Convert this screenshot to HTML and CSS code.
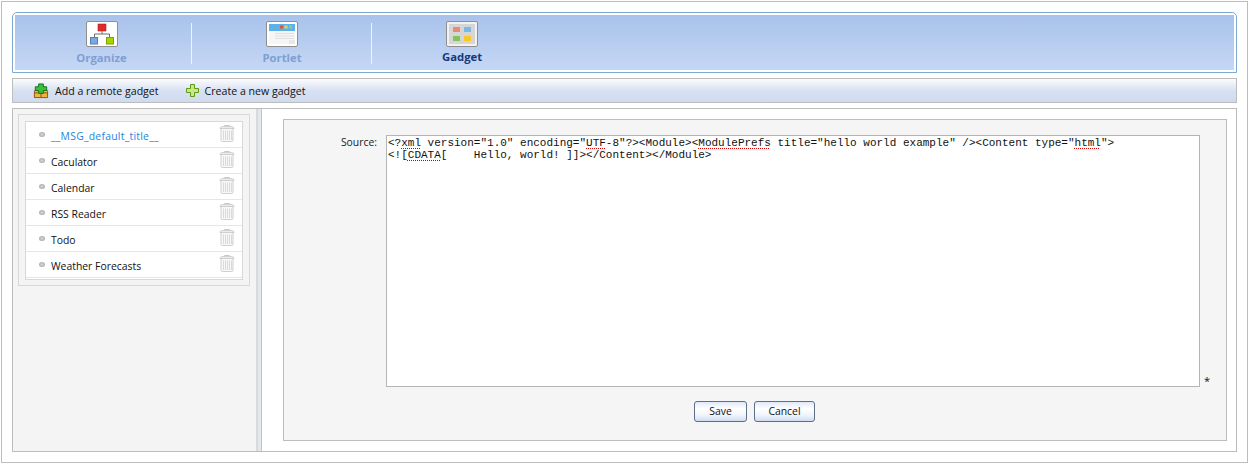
FILE: index.html
```html
<!DOCTYPE html>
<html lang="en">
<head>
<meta charset="utf-8">
<title>Gadget</title>
<link rel="stylesheet" href="styles.css">
</head>
<body>
<svg class="defs" width="0" height="0" aria-hidden="true">
  <defs>
    <symbol id="trash" viewBox="0 0 16 18">
      <path d="M5.500 2.500V1.500h5v1M1 4.500C1 3.400 2 2.700 3 2.700h10c1 0 2 .7 2 1.800z" fill="#f4f4f4" stroke="#c9c9c9"/>
      <path d="M2 4.500h12v11.700c0 .8-.6 1.300-1.300 1.300H3.300c-.7 0-1.300-.5-1.300-1.300z" fill="#f7f7f7" stroke="#cfcfcf"/>
      <path d="M4.500 6.500v9.500M6.500 6.500v9.500M8.500 6.500v9.500M10.500 6.500v9.500M12.500 6.500v9.500" stroke="#dadada"/>
    </symbol>
  </defs>
</svg>
<div class="shell">
  <nav class="tabs">
    <a class="tab tab-first">
      <span class="tile">
        <svg width="30" height="24" viewBox="0 0 30 24">
          <rect x="11" y="2" width="8" height="7" fill="#dd2a2a" stroke="#b52020" stroke-width=".6"/>
          <path d="M15 9v3M7.500 15v-3h15v3" fill="none" stroke="#6a6a6a"/>
          <rect x="3.500" y="15.500" width="7" height="6.500" fill="#79a9de" stroke="#4e7fb8"/>
          <rect x="19.500" y="15.500" width="7" height="6.500" fill="#a5d600" stroke="#7da400"/>
        </svg>
      </span>
      <span class="tab-label">Organize</span>
    </a>
    <a class="tab tab-middle">
      <span class="tile">
        <svg width="30" height="24" viewBox="0 0 30 24">
          <rect x="2" y="2" width="26" height="7" fill="#5cb2e8"/>
          <rect x="13" y="3.500" width="3" height="3" fill="#e8532c"/>
          <rect x="17.500" y="3.500" width="3" height="3" fill="#f0cf58"/>
          <rect x="22" y="3.500" width="3" height="3" fill="#8fcf72"/>
          <rect x="2" y="9" width="26" height="13" fill="#f6f6f6"/>
          <path d="M8 11.500h19M8 14h19M8 16.500h19" stroke="#e0e0e0"/>
          <rect x="22" y="18" width="6" height="4" fill="#e8e8e8"/>
        </svg>
      </span>
      <span class="tab-label">Portlet</span>
    </a>
    <a class="tab tab-last tab-active">
      <span class="tile tile-active">
        <svg width="30" height="24" viewBox="0 0 30 24">
          <rect x="2" y="2" width="26" height="20" fill="#d6d6d6"/>
          <rect x="6" y="5" width="7" height="5" fill="#ea8a72"/>
          <rect x="17" y="5" width="7" height="5" fill="#7ab8e6"/>
          <rect x="6" y="14" width="7" height="5" fill="#84c158"/>
          <rect x="17" y="14" width="7" height="5" fill="#f8c828"/>
        </svg>
      </span>
      <span class="tab-label">Gadget</span>
    </a>
  </nav>

  <div class="toolbar">
    <a class="tool tool-remote">
      <svg width="16" height="16" viewBox="0 0 17 16">
        <path d="M2.500 6.500h12l1 2v6.500h-14V8.500z" fill="#f2b33c" stroke="#8a5212"/>
        <path d="M1.500 10h14M8.500 7v8" stroke="#8a5212"/>
        <path d="M6 .5h5v3h3.500v4H11v3H6V7.500H2.500v-4H6z" fill="#39c13c" stroke="#146e1a"/>
      </svg>
      <span>Add a remote gadget</span>
    </a>
    <a class="tool">
      <svg width="13" height="13" viewBox="0 0 13 13">
        <path d="M4.500 .5h4v4h4v4h-4v4h-4v-4h-4v-4h4z" fill="#c6e88a" stroke="#5f9a14"/>
      </svg>
      <span>Create a new gadget</span>
    </a>
  </div>

  <div class="main">
    <aside class="side">
      <div class="side-box">
        <ul class="list">
          <li class="row row-current"><i class="dot"></i><span class="name">__MSG_default_title__</span><svg class="bin"><use href="#trash"/></svg></li>
          <li class="row"><i class="dot"></i><span class="name">Caculator</span><svg class="bin"><use href="#trash"/></svg></li>
          <li class="row"><i class="dot"></i><span class="name">Calendar</span><svg class="bin"><use href="#trash"/></svg></li>
          <li class="row"><i class="dot"></i><span class="name">RSS Reader</span><svg class="bin"><use href="#trash"/></svg></li>
          <li class="row"><i class="dot"></i><span class="name">Todo</span><svg class="bin"><use href="#trash"/></svg></li>
          <li class="row"><i class="dot"></i><span class="name">Weather Forecasts</span><svg class="bin"><use href="#trash"/></svg></li>
        </ul>
      </div>
    </aside>
    <div class="splitter"></div>
    <section class="content">
      <form class="panel">
        <div class="field">
          <label class="field-label">Source:</label>
          <div class="source">&lt;?<u>xml</u> version="1.0" encoding="<u>UTF</u>-8"?&gt;&lt;Module&gt;&lt;<u>ModulePrefs</u> title="hello world example" /&gt;&lt;Content type="<u>html</u>"&gt;
&lt;![<u>CDATA</u>[    Hello, world! ]]&gt;&lt;/Content&gt;&lt;/Module&gt;</div>
          <span class="required">*</span>
        </div>
        <div class="actions">
          <button type="button" class="btn btn-save">Save</button>
          <button type="button" class="btn btn-cancel">Cancel</button>
        </div>
      </form>
    </section>
  </div>
</div>
</body>
</html>
```
FILE: styles.css
```css
* { box-sizing: border-box; }
html, body { margin: 0; background: #fff; }
body {
  padding: 1px 0 0 1px;
  font: 10.4px/13px "Open Sans", "Liberation Sans", sans-serif;
  color: #111;
}
.defs { position: absolute; }
.shell {
  width: 1247px;
  height: 462px;
  border: 1px solid #bdbdbd;
  padding: 10px;
  display: flex;
  flex-direction: column;
}
.tabs {
  height: 61px;
  border: 1px solid #7ea9d3;
  border-radius: 5px 5px 0 0;
  padding: 2px;
  flex: none;
  display: flex;
  background: #fff;
}
.tab {
  width: 180px;
  height: 55px;
  display: flex;
  flex-direction: column;
  align-items: center;
  padding-top: 6px;
  background: linear-gradient(#a9c2ea, #c5d7f5);
  position: relative;
  font-weight: 700;
  color: #7f9fd2;
}
.tab-first { width: 177px; padding-right: 4px; }
.tab-last { flex: 1; width: auto; align-items: flex-start; padding-left: 74px; }
.tab:not(.tab-last)::after {
  content: "";
  position: absolute;
  right: 0;
  top: 8px;
  height: 41px;
  width: 1px;
  background: #eef3fc;
}
.tile {
  width: 32px;
  height: 26px;
  background: #fff;
  border: 1px solid #8f8f8f;
  border-radius: 2px;
  display: flex;
  flex: none;
}
.tile-active { background: #f2f2f2; }
.tab-label { margin-top: 3px; line-height: 15px; font-size: 11.3px; }
.tab-active .tab-label { color: #17397a; margin: 2px 0 0 -4px; }
.toolbar {
  margin-top: 5px;
  height: 25px;
  flex: none;
  border: 1px solid #bdbdbd;
  background: linear-gradient(#fbfcfe, #d8e1f2 50%, #cfdbef);
  display: flex;
  align-items: center;
  padding: 1px 0 0 20px;
  gap: 27px;
  font-size: 10.6px;
}
.tool { display: flex; align-items: center; gap: 6px; color: #111; }
.tool svg { flex: none; margin-top: -1px; }
.main {
  margin-top: 5px;
  flex: 1;
  border: 1px solid #bdbdbd;
  display: flex;
  min-height: 0;
}
.side {
  width: 243px;
  flex: none;
  background: #f4f4f4;
  padding: 5px 5px 0;
}
.side-box {
  width: 232px;
  height: 172px;
  border: 1px solid #d8d8d8;
  padding: 6px 6px 5px;
}
.list {
  list-style: none;
  margin: 0;
  padding: 0 0 2px;
  background: #fff;
  border: 1px solid #d8d8d8;
  height: 159px;
}
.row {
  height: 26px;
  display: flex;
  align-items: center;
  border-bottom: 1px solid #e6e6e6;
  padding: 4px 7px 0 13px;
  white-space: nowrap;
}
.row-current { color: #1c86e0; letter-spacing: .25px; }
.dot {
  width: 6px;
  height: 5px;
  border-radius: 50%;
  background: radial-gradient(#d8d8d8, #9c9c9c);
  flex: none;
  margin: -4px 6px 0 0;
}
.name { flex: 1; }
.bin { width: 16px; height: 18px; flex: none; margin-top: -8px; }
.splitter {
  width: 6px;
  flex: none;
  background: #e4e8ea;
  border-left: 2px solid #d6dadb;
  border-right: 1px solid #b9c6c6;
}
.content {
  flex: 1;
  min-width: 0;
  padding: 10px 9px 10px 21px;
}
.panel {
  height: 100%;
  border: 1px solid #bdbdbd;
  background: #f5f5f5;
  padding-top: 15px;
}
.field { display: flex; align-items: flex-start; }
.field-label {
  width: 93px;
  text-align: right;
  color: #222;
  flex: none;
  padding-top: 1px;
}
.source {
  width: 814px;
  height: 252px;
  margin-left: 9px;
  flex: none;
  background: #fff;
  border: 1px solid #b5b5b5;
  padding: 1px 1px 0;
  font: 11px/12px "Liberation Mono", monospace;
  color: #111;
  white-space: pre-wrap;
  overflow: hidden;
}
.source u {
  text-decoration: underline dotted #e00000;
  text-decoration-skip-ink: none;
  text-underline-offset: 2px;
}
.required {
  align-self: flex-end;
  margin: 0 0 1px 4px;
  font-size: 11px;
  line-height: 11px;
}
.actions {
  display: flex;
  gap: 7px;
  padding: 14px 0 0 410px;
}
.btn {
  height: 21px;
  padding: 0;
  font: inherit;
  color: #111;
  border: 1px solid #5d6f88;
  border-radius: 3px;
  background: linear-gradient(#dfe9fb, #fff 35%, #f0f4fb 70%, #cfdcf2);
}
.btn-save { width: 53px; }
.btn-cancel { width: 61px; }
```
